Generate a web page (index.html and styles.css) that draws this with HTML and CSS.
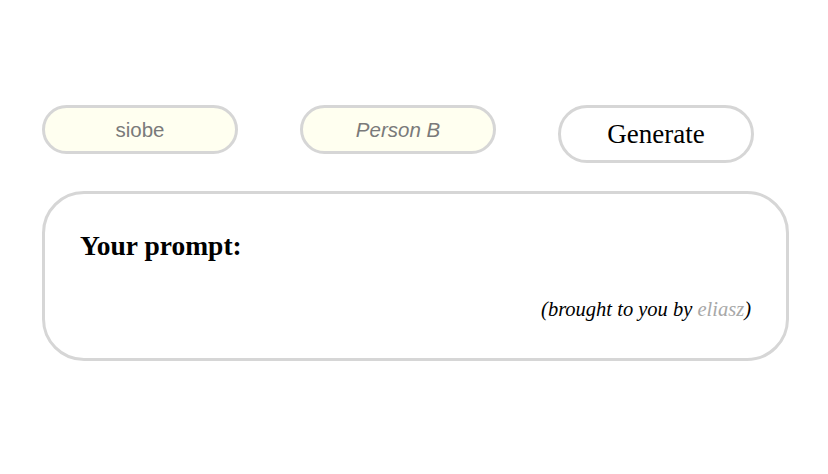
FILE: index.html
```html
<!DOCTYPE html>
<html>
<head>
<meta charset="utf-8">
<link rel="stylesheet" href="styles.css">
</head>
<body>
<main class="page">
  <div class="controls">
    <input class="name-input" type="text" value="siobe">
    <input class="name-input" type="text" placeholder="Person B">
    <button class="generate">Generate</button>
  </div>
  <section class="card">
    <h2 class="prompt-title">Your prompt:</h2>
    <p class="credit">(brought to you by <a class="credit-link">eliasz</a>)</p>
  </section>
</main>
</body>
</html>
```
FILE: styles.css
```css
html, body {
  margin: 0;
  padding: 0;
  background: #ffffff;
}
.page {
  padding: 105px 0 0 42px;
  width: 747px;
  font-family: "Liberation Serif", "Times New Roman", serif;
}
.controls {
  display: flex;
  align-items: flex-start;
  gap: 62px;
  width: 712px;
}
.name-input {
  box-sizing: border-box;
  width: 196px;
  height: 49px;
  border: 3px solid #d6d6d6;
  border-radius: 25px;
  background: #fffff0;
  font-family: "Liberation Sans", Arial, sans-serif;
  font-size: 20.5px;
  color: #7a7a7a;
  text-align: center;
  padding: 0 10px;
  outline: none;
  margin: 0;
}
.name-input::placeholder {
  color: #7a7a7a;
  font-style: italic;
  opacity: 1;
}
.generate {
  box-sizing: border-box;
  width: 196px;
  height: 58px;
  border: 3px solid #d6d6d6;
  border-radius: 29px;
  background: #ffffff;
  font-family: "Liberation Serif", "Times New Roman", serif;
  font-size: 27px;
  color: #000;
  padding: 0;
  margin: 0;
}
.card {
  box-sizing: border-box;
  margin-top: 28px;
  width: 747px;
  border: 3px solid #d6d6d6;
  border-radius: 42px;
  padding: 36px 35px 37px 35px;
}
.prompt-title {
  margin: 0;
  font-size: 27.5px;
  line-height: 31px;
  font-weight: bold;
}
.credit {
  margin: 36px 0 0;
  text-align: right;
  font-style: italic;
  font-size: 20.5px;
  line-height: 24px;
}
.credit-link {
  color: #a8a8a8;
}
```
